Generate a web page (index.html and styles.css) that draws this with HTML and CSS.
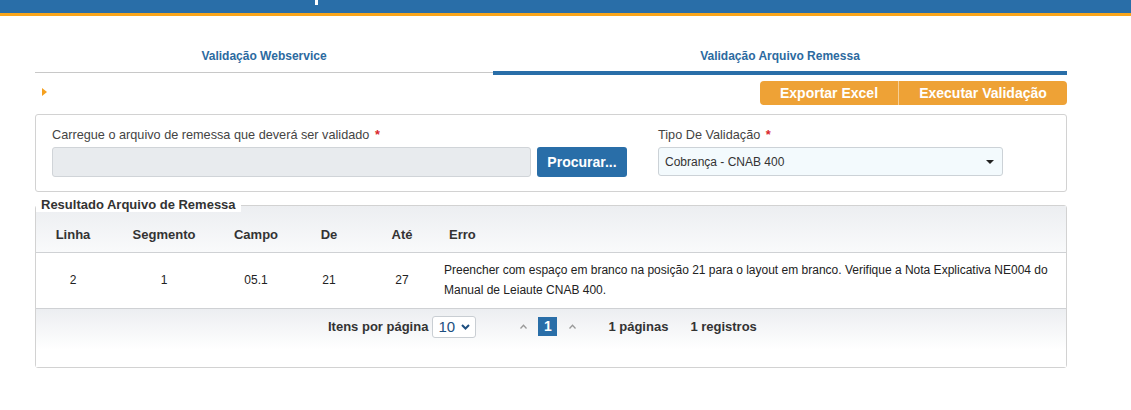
FILE: index.html
```html
<!DOCTYPE html>
<html>
	<head>
		<title>Validação Arquivo Remessa</title>
		<link rel="stylesheet" href="styles.css">
	</head>
	<body>
		<div class="topbar"><span class="topbar-mark"></span></div>

		<div class="page">
			<div class="tabs">
				<div class="tab">Validação Webservice</div>
				<div class="tab tab-active">Validação Arquivo Remessa</div>
			</div>

			<div class="toolbar">
				<span class="arrow"></span>
				<div class="btn-group">
					<button class="btn-orange">Exportar Excel</button>
					<button class="btn-orange">Executar Validação</button>
				</div>
			</div>

			<div class="panel">
				<div class="field field-file">
					<label>Carregue o arquivo de remessa que deverá ser validado <b class="req">*</b></label>
					<div class="file-row">
						<div class="file-input"></div>
						<button class="btn-blue">Procurar...</button>
					</div>
				</div>
				<div class="field field-type">
					<label>Tipo De Validação <b class="req">*</b></label>
					<div class="select">
						<span>Cobrança - CNAB 400</span>
						<span class="caret"></span>
					</div>
				</div>
			</div>

			<div class="result">
				<span class="legend">Resultado Arquivo de Remessa</span>
				<table class="grid">
					<thead>
						<tr>
							<th class="c1">Linha</th>
							<th class="c2">Segmento</th>
							<th class="c3">Campo</th>
							<th class="c4">De</th>
							<th class="c5">Até</th>
							<th class="c6">Erro</th>
						</tr>
					</thead>
					<tbody>
						<tr>
							<td>2</td>
							<td>1</td>
							<td>05.1</td>
							<td>21</td>
							<td>27</td>
							<td class="erro">Preencher com espaço em branco na posição 21 para o layout em branco. Verifique a Nota Explicativa NE004 do Manual de Leiaute CNAB 400.</td>
						</tr>
					</tbody>
				</table>
				<div class="pager">
					<span class="pager-label">Itens por página</span>
					<div class="pager-select">10
						<svg width="9" height="6" viewBox="0 0 9 6"><path d="M1 1 L4.5 4.5 L8 1" fill="none" stroke="#1d4f80" stroke-width="2"/></svg>
					</div>
					<svg class="pager-prev" width="7" height="5" viewBox="0 0 7 5"><path d="M0.5 4.5 L3.5 1.2 L6.5 4.5" fill="none" stroke="#999" stroke-width="1.3"/></svg>
					<span class="pager-page">1</span>
					<svg class="pager-next" width="7" height="5" viewBox="0 0 7 5"><path d="M0.5 4.5 L3.5 1.2 L6.5 4.5" fill="none" stroke="#999" stroke-width="1.3"/></svg>
					<span class="pager-pages">1 páginas</span>
					<span class="pager-total">1 registros</span>
				</div>
			</div>
		</div>
	</body>
</html>
```

FILE: styles.css
```css
body{
	margin: 0;
	font-family: "Liberation Sans", Arial, sans-serif;
	color: #333;
	background: #fff;
}
.topbar{
	height: 13px;
	background: #296ea8;
	border-bottom: 3px solid #f9a51b;
	position: relative;
}
.topbar-mark{
	position: absolute;
	left: 315px;
	top: 0;
	width: 3px;
	height: 5px;
	background: #fff;
}
.page{
	width: 1032px;
	margin-left: 35px;
}

/* abas */
.tabs{
	display: flex;
	align-items: flex-start;
	margin-top: 23px;
}
.tab{
	width: 458px;
	height: 33px;
	line-height: 35px;
	text-align: center;
	font-size: 12px;
	font-weight: bold;
	color: #2c6aa0;
	border-bottom: 1px solid #c8c8c8;
}
.tab-active{
	width: 574px;
	height: 32px;
	line-height: 35px;
	border-bottom: 4px solid #296ea8;
}

/* barra de botoes */
.toolbar{
	display: flex;
	justify-content: space-between;
	align-items: center;
	margin-top: 6px;
}
.arrow{
	width: 0;
	height: 0;
	margin-left: 7px;
	margin-top: -2px;
	border-top: 4px solid transparent;
	border-bottom: 4px solid transparent;
	border-left: 5px solid #f5a01f;
}
.btn-group{
	display: flex;
}
.btn-orange{
	height: 24px;
	padding: 0;
	border: 0;
	background: #eea236;
	color: #fff;
	font-family: "Liberation Sans", Arial, sans-serif;
	font-size: 14px;
	font-weight: bold;
	cursor: pointer;
}
.btn-orange:first-child{
	width: 139px;
	border-radius: 4px 0 0 4px;
	border-right: 1px solid #f6cf96;
}
.btn-orange:last-child{
	width: 168px;
	border-radius: 0 4px 4px 0;
}

/* formulario */
.panel{
	display: flex;
	margin-top: 9px;
	padding: 13px 16px 14px 16px;
	border: 1px solid #d2d2d2;
	border-radius: 3px;
}
.field label{
	display: block;
	height: 19px;
	font-size: 12.7px;
	color: #444;
}
.req{
	color: #d9262c;
	font-weight: bold;
	margin-left: 2px;
}
.field-file{
	width: 575px;
}
.file-row{
	display: flex;
	gap: 6px;
}
.file-input{
	width: 477px;
	height: 28px;
	background: #e8ebee;
	border: 1px solid #d0d4d8;
	border-radius: 3px;
}
.btn-blue{
	width: 90px;
	height: 30px;
	border: 0;
	border-radius: 3px;
	background: #296ea8;
	color: #fff;
	font-family: "Liberation Sans", Arial, sans-serif;
	font-size: 14px;
	font-weight: bold;
}
.field-type{
	margin-left: 31px;
}
.select{
	display: flex;
	justify-content: space-between;
	align-items: center;
	width: 331px;
	height: 27px;
	padding: 0 6px;
	background: #f3fafd;
	border: 1px solid #ccd2d7;
	border-radius: 3px;
	font-size: 12px;
	color: #333;
}
.caret{
	width: 0;
	height: 0;
	margin-right: 2px;
	border-left: 4px solid transparent;
	border-right: 4px solid transparent;
	border-top: 4px solid #222;
}

/* resultado */
.result{
	position: relative;
	margin-top: 13px;
	border: 1px solid #d2d2d2;
	border-radius: 3px;
}
.legend{
	position: absolute;
	left: 0;
	top: -9px;
	padding: 0 5px;
	background: #fff;
	font-size: 13px;
	font-weight: bold;
	color: #333;
}
.grid{
	width: 100%;
	table-layout: fixed;
	border-collapse: collapse;
}
.grid th{
	height: 46px;
	padding: 11px 0 0 0;
	box-sizing: border-box;
	font-size: 13px;
	font-weight: bold;
	color: #333;
	text-align: center;
	background: linear-gradient(#eceef1, #f9fafb);
	border-bottom: 1px solid #cfd1d4;
}
.grid .c1{ width: 74px; }
.grid .c2{ width: 108px; }
.grid .c3{ width: 76px; }
.grid .c4{ width: 70px; }
.grid .c5{ width: 76px; }
.grid .c6{
	text-align: left;
	padding-left: 9px;
}
.grid td{
	height: 55px;
	padding: 0;
	font-size: 12px;
	text-align: center;
	color: #222;
	border-bottom: 1px solid #cfd1d4;
}
.grid td.erro{
	text-align: left;
	padding: 0 10px 0 4px;
	line-height: 20px;
}
.pager{
	display: flex;
	align-items: center;
	height: 36px;
	padding: 0 0 22px 292px;
	background: linear-gradient(#eceef1, #fff 70%);
	font-size: 13px;
	font-weight: bold;
	color: #333;
}
.pager-select{
	display: flex;
	align-items: center;
	justify-content: space-between;
	box-sizing: border-box;
	width: 44px;
	height: 22px;
	margin-left: 4px;
	padding: 0 5px;
	border: 1px solid #c9ced3;
	border-radius: 3px;
	background: #fff;
	font-size: 15px;
	font-weight: normal;
	color: #1d4f80;
}
.pager-prev{
	margin-left: 44px;
}
.pager-page{
	width: 19px;
	height: 19px;
	line-height: 19px;
	margin-left: 11px;
	text-align: center;
	background: #296ea8;
	color: #fff;
	font-size: 14px;
}
.pager-next{
	margin-left: 12px;
}
.pager-pages{
	margin-left: 32px;
}
.pager-total{
	margin-left: 22px;
}
```
